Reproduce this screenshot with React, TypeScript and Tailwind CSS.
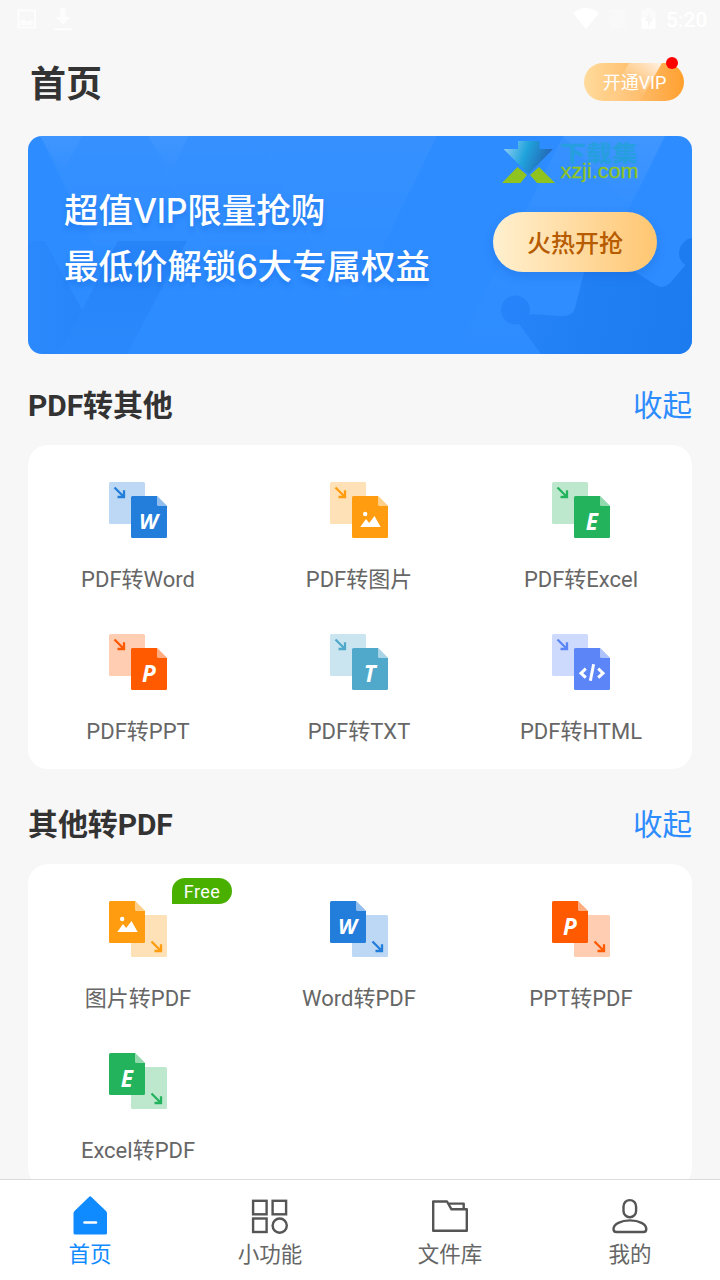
import type { ReactNode } from "react"

type Glyph = 'W' | 'E' | 'P' | 'T' | 'image' | 'html'

interface Tool {
    label: string
    glyph: Glyph
    color: string
    free?: boolean
}

interface ToolIconProps {
    glyph: Glyph
    color: string
    reverse?: boolean
}

interface ToolSectionProps {
    title: string
    tools: Tool[]
    reverse?: boolean
    className?: string
}

const fromPdf: Tool[] = [
    { label: 'PDF转Word', glyph: 'W', color: '#227ddb' },
    { label: 'PDF转图片', glyph: 'image', color: '#ff9c0f' },
    { label: 'PDF转Excel', glyph: 'E', color: '#24b35d' },
    { label: 'PDF转PPT', glyph: 'P', color: '#ff5a00' },
    { label: 'PDF转TXT', glyph: 'T', color: '#50a9cb' },
    { label: 'PDF转HTML', glyph: 'html', color: '#5c86f8' },
]

const toPdf: Tool[] = [
    { label: '图片转PDF', glyph: 'image', color: '#ff9c0f', free: true },
    { label: 'Word转PDF', glyph: 'W', color: '#227ddb' },
    { label: 'PPT转PDF', glyph: 'P', color: '#ff5a00' },
    { label: 'Excel转PDF', glyph: 'E', color: '#24b35d' },
]

function GlyphMark({ glyph }: { glyph: Glyph }) {
    if (glyph === 'image') {
        return (
            <g fill="#fff">
                <circle cx="13.2" cy="18" r="2.2" />
                <path d="M8.3 31 L14 23 L17.2 27 L22.5 20 L28.7 31 Z" />
            </g>
        )
    }
    if (glyph === 'html') {
        return (
            <g fill="none" stroke="#fff" strokeWidth="3">
                <path d="M11.8 20.7 L7 25.2 L11.8 29.7" />
                <path d="M24.2 20.7 L29 25.2 L24.2 29.7" />
                <path d="M19.6 16.3 L16.4 32.8" />
            </g>
        )
    }
    if (glyph === 'W') {
        return (
            <text x="8" y="32.5" textLength="19" lengthAdjust="spacingAndGlyphs" fill="#fff" className="font-['Open_Sans'] text-[21px] font-bold italic">W</text>
        )
    }
    return (
        <text x="17.8" y="33.6" textAnchor="middle" fill="#fff" className="font-['Open_Sans'] text-[22.5px] font-bold italic">{glyph}</text>
    )
}

function ToolIcon({ glyph, color, reverse }: ToolIconProps) {
    return (
        <svg width="58" height="56" viewBox="0 0 58 56">
            <g transform={reverse ? 'translate(22 14)' : undefined}>
                <rect width="36" height="42" rx="1.5" fill={color} opacity="0.3" />
                <path
                    d="M5.5 5.5 L15 15 M8.5 15 H15 V8.2"
                    transform={reverse ? 'translate(15 21)' : undefined}
                    fill="none"
                    stroke={color}
                    strokeWidth="2.3"
                />
            </g>
            <g transform={reverse ? undefined : 'translate(22 14)'}>
                <path d="M1.5 0 H26 L36 10 V40.5 Q36 42 34.5 42 H1.5 Q0 42 0 40.5 V1.5 Q0 0 1.5 0 Z" fill={color} />
                <path d="M26 0 L36 10 H27.5 Q26 10 26 8.5 Z" fill="#fff" opacity="0.5" />
                <GlyphMark glyph={glyph} />
            </g>
        </svg>
    )
}

function ToolSection({ title, tools, reverse, className }: ToolSectionProps) {
    return (
        <section className={className}>
            <div className="flex h-11 items-center justify-between">
                <h2 className="text-[30px] font-bold tracking-[-0.1px] text-[#333]">{title}</h2>
                <span className="pt-0.5 text-[29.5px] text-[#2d8cff]">收起</span>
            </div>
            <div className="mt-[18px] grid grid-cols-[220px_222px_222px] rounded-[20px] bg-white py-[10px]">
                {tools.map((tool) => (
                    <div key={tool.label} className="relative flex h-[152px] flex-col items-center pt-[27px]">
                        <ToolIcon glyph={tool.glyph} color={tool.color} reverse={reverse} />
                        <span className="mt-[26px] text-[22px] leading-8 text-[#666]">{tool.label}</span>
                        {tool.free && (
                            <span className="absolute left-36 top-1 flex h-[26px] w-[60px] items-center justify-center rounded-[13px] rounded-bl-none bg-[#49b000] text-[18px] tracking-[0.4px] text-white">
                                Free
                            </span>
                        )}
                    </div>
                ))}
            </div>
        </section>
    )
}

function StatusBar() {
    return (
        <div className="flex h-10 items-center justify-between pl-[17px] pr-3 text-white">
            <svg width="60" height="40" viewBox="0 0 60 40" fill="currentColor" opacity="0.8">
                <path d="M0.5 9.5 H19 V28.5 H0.5 Z M2.5 11.5 V26.5 H17 V11.5 Z" fillRule="evenodd" />
                <path d="M3.5 25 V21 L7 19 L10 22 L13 20 L16 22 V25 Z" />
                <path d="M43.5 8 H48.5 V17 H53 L46 25 L39 17 H43.5 Z M37.5 28 H55 V30.5 H37.5 Z" />
            </svg>
            <div className="flex items-center">
                <svg width="88" height="40" viewBox="0 0 88 40" fill="currentColor">
                    <path d="M0 13 Q13 3 26 13 L13 29 Z" />
                    <path d="M38 10 L52 24 V9 H42 Z M37 13 V28 H51 Z" opacity="0.3" />
                    <path d="M36 10 L54 28" stroke="currentColor" strokeWidth="1.2" opacity="0.4" />
                    <path d="M68.5 10 H72.5 V8 H78.5 V10 H82.5 V18 H80.5 H77 V12 L71.5 21 H68.5 Z" opacity="0.5" />
                    <path d="M68.5 18 H73 L71.5 21 H75 V27 L80.5 18 H82.5 V29 H68.5 Z" />
                </svg>
                <span className="w-[47px] pl-[5px] text-[21px] font-medium leading-10">5:20</span>
            </div>
        </div>
    )
}

function WatermarkLogo() {
    return (
        <svg width="140" height="46" viewBox="0 0 140 46" className="absolute left-[473px] top-[3px]">
            <defs>
                <linearGradient id="arrow" x1="0" x2="1" y1="0" y2="0.25">
                    <stop offset="0" stopColor="#9bd2f5" />
                    <stop offset="0.5" stopColor="#20a3dc" />
                    <stop offset="1" stopColor="#2465b5" />
                </linearGradient>
            </defs>
            <path d="M17 2 H38.5 V10 H52 L27.5 35 L2.5 10 H17 Z" fill="url(#arrow)" />
            <path d="M16.5 28 L26 36 L19.5 44 H1 Z M38 28 L54 44 H36 L29 36 Z" fill="#8fc31f" />
            <text x="59" y="21.5" textLength="78" lengthAdjust="spacingAndGlyphs" fill="#25a0dd" opacity="0.9" className="text-[21.5px] font-black">下载集</text>
            <text x="59.5" y="39" textLength="78" lengthAdjust="spacingAndGlyphs" fill="#8fc31f" stroke="#8fc31f" strokeWidth="0.3" className="font-['Liberation_Sans'] text-[20px]">xzji.com</text>
        </svg>
    )
}

function Banner() {
    return (
        <div className="relative mx-7 mt-[9px] flex h-[218px] justify-between overflow-hidden rounded-[14px] bg-[#2d8cff]">
            <svg width="664" height="218" viewBox="0 0 664 218" className="absolute inset-0">
                <defs>
                    <linearGradient id="light" x1="0" x2="0" y1="0" y2="1">
                        <stop offset="0" stopColor="#fff" stopOpacity="0.045" />
                        <stop offset="1" stopColor="#fff" stopOpacity="0" />
                    </linearGradient>
                    <linearGradient id="dark" x1="0" x2="0" y1="0" y2="1">
                        <stop offset="0" stopColor="#176fe5" stopOpacity="0.3" />
                        <stop offset="1" stopColor="#176fe5" stopOpacity="0.12" />
                    </linearGradient>
                    <linearGradient id="darkLeft" x1="0" x2="1" y1="0" y2="0">
                        <stop offset="0" stopColor="#176fe5" stopOpacity="0.1" />
                        <stop offset="1" stopColor="#176fe5" stopOpacity="0.24" />
                    </linearGradient>
                    <linearGradient id="crown" gradientUnits="userSpaceOnUse" x1="473" x2="664" y1="150" y2="190">
                        <stop offset="0" stopColor="#2784fa" />
                        <stop offset="0.5" stopColor="#217ff4" />
                        <stop offset="1" stopColor="#1d7bf0" />
                    </linearGradient>
                </defs>
                <g fill="url(#light)">
                    <path d="M12 0 H120 L205 160 L150 110 H66 Z" />
                    <path d="M120 0 H232 L310 155 L250 110 H177 Z" />
                    <path d="M12 0 H54 L35 37 Z" />
                    <path d="M120 0 H160 L143 37 Z" />
                    <path d="M232 0 H409 L321 180 Z" />
                    <path d="M427 218 L535 0 H637 L528 218 Z" />
                    <path d="M535 0 H637 L603 72 Z" />
                </g>
                <path d="M90 105 H159 L99 218 H30 L54 174 Z" fill="url(#dark)" />
                <path d="M0 105 H17 L54 174 L30 218 H0 Z" fill="url(#darkLeft)" />
                <g fill="url(#crown)">
                    <path d="M503 178 L533 180 Q544 181 547 172 L559 125 L604 134 L628 149 Q635 154 643 146 L660 126 H664 V218 H513 L491 188 Z" />
                    <circle cx="487.5" cy="174" r="14.5" />
                    <circle cx="666" cy="117" r="15" />
                </g>
            </svg>
            <div className="relative ml-9 mt-[47px] whitespace-nowrap text-[34.5px] font-medium leading-[56px] text-white [text-shadow:0_4px_5px_rgba(10,90,210,0.3)]">
                <p>超值<span className="font-['Inter'] text-[34px] tracking-[-0.3px]">VIP</span>限量抢购</p>
                <p>最低价解锁<span className="font-['Inter'] text-[34px] tracking-[-0.5px]">6</span>大专属权益</p>
            </div>
            <button className="relative mr-[35px] mt-[76px] h-[60px] w-[164px] rounded-full bg-linear-to-r from-[#fff0cf] to-[#ffc670] pt-[3px] text-[24px] font-medium text-[#b65b00] shadow-[0_5px_10px_rgba(15,90,200,0.25)]">
                火热开抢
            </button>
            <WatermarkLogo />
        </div>
    )
}

function NavItem({ label, active, children }: { label: string, active?: boolean, children: ReactNode }) {
    return (
        <div className="flex flex-1 flex-col items-center pt-[15px]">
            <svg width="40" height="42" viewBox="0 0 40 42" fill="none" stroke="#555" strokeWidth="2.4">
                {children}
            </svg>
            <span className={active ? 'mt-0.5 text-[21.5px] leading-8 text-[#108aff]' : 'mt-0.5 text-[21.5px] leading-8 text-[#666]'}>{label}</span>
        </div>
    )
}

export default function App() {
    return (
        <div className="flex h-[1280px] w-[720px] flex-col overflow-hidden bg-[#f7f7f7] font-['Roboto','Noto_Sans_CJK_SC',sans-serif]">
            <StatusBar />
            <header className="flex h-[87px] shrink-0 items-center justify-between pl-[30px] pr-9">
                <h1 className="pt-0.5 text-[36px] font-bold text-[#333]">首页</h1>
                <div className="relative mt-[-3px] flex h-[38px] w-[100px] items-center justify-center rounded-full bg-linear-to-r from-[#ffdb9c] to-[#ffa02c] text-[18px] text-white">
                    <svg width="100" height="38" viewBox="0 0 100 38" className="absolute inset-0">
                        <defs>
                            <linearGradient id="shine" gradientUnits="userSpaceOnUse" x1="74" x2="50" y1="0" y2="24">
                                <stop offset="0" stopColor="#fff" stopOpacity="0.8" />
                                <stop offset="1" stopColor="#fff" stopOpacity="0.06" />
                            </linearGradient>
                        </defs>
                        <path d="M45 0 H78 L56 38 H24 Z" fill="url(#shine)" />
                    </svg>
                    <span className="relative pl-px">开通VIP</span>
                    <span className="absolute -top-1.5 right-1.5 size-3 rounded-full bg-[#f00]" />
                </div>
            </header>
            <Banner />
            <main className="min-h-0 flex-1 overflow-hidden px-7">
                <ToolSection title="PDF转其他" tools={fromPdf} className="mt-[29px]" />
                <ToolSection title="其他转PDF" tools={toPdf} reverse className="mt-[33px]" />
            </main>
            <nav className="flex h-[101px] shrink-0 border-t border-[#dcdcdc] bg-white">
                <NavItem label="首页" active>
                    <path d="M19 1.9 Q20.2 0.8 21.4 1.9 L36 16 Q37 17 37 18.5 V38 Q37 39.5 35.5 39.5 H5 Q3.5 39.5 3.5 38 V18.5 Q3.5 17 4.5 16 Z" fill="#108aff" stroke="none" />
                    <path d="M14.5 27.5 H26" stroke="#fff" strokeWidth="2.6" strokeLinecap="round" />
                </NavItem>
                <NavItem label="小功能">
                    <rect x="3.1" y="5.8" width="13.5" height="13.5" />
                    <rect x="22.6" y="5.8" width="13.5" height="13.5" />
                    <rect x="3.1" y="23.5" width="13.5" height="13.5" />
                    <circle cx="29.7" cy="30.6" r="7.1" />
                </NavItem>
                <NavItem label="文件库">
                    <path d="M3.2 6.5 H17 L21.5 14.3 H36.8 V35.8 H3.2 Z M18 8.6 H33.7 V14" strokeLinejoin="round" />
                </NavItem>
                <NavItem label="我的">
                    <rect x="13.5" y="5.1" width="12.6" height="17.2" rx="6.3" />
                    <path d="M3.5 34 C3.5 29 11 25.4 20 25.4 C29 25.4 36.3 29 36.3 34 Q36.3 37 33.5 37 H6.3 Q3.5 37 3.5 34 Z" />
                </NavItem>
            </nav>
        </div>
    )
}
